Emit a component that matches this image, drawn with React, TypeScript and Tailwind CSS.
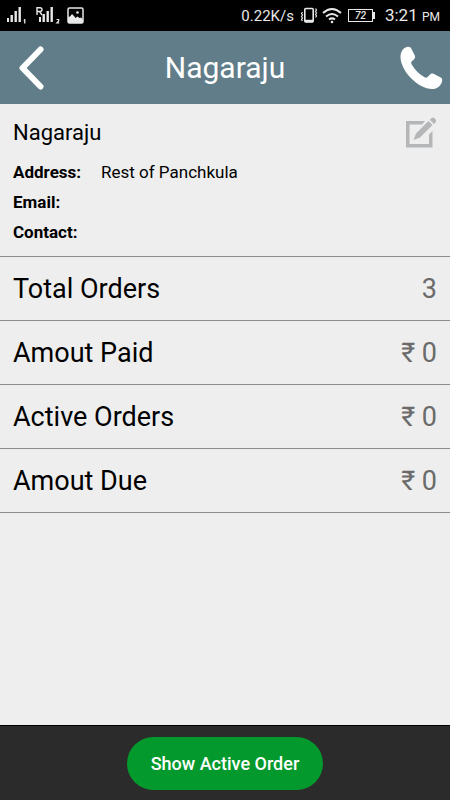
const ROWS = [
  { label: 'Total Orders', value: '3' },
  { label: 'Amout Paid', value: '₹ 0' },
  { label: 'Active Orders', value: '₹ 0' },
  { label: 'Amout Due', value: '₹ 0' },
];

function SignalOne() {
  return (
    <svg width="20" height="18" viewBox="0 0 20 18" fill="#e8e8e8" aria-hidden="true">
      <rect x="0" y="11" width="2" height="4" />
      <rect x="3.500" y="8" width="2.400" height="7" />
      <rect x="7.500" y="4" width="2.400" height="11" />
      <rect x="11.500" y="0" width="2.400" height="15" />
      <path d="M16.500 13l1-1h.900v4.500h-1.300v-3h-.600z" />
    </svg>
  );
}

function SignalTwo() {
  return (
    <svg width="25" height="18" viewBox="0 0 25 18" fill="#e8e8e8" aria-hidden="true">
      <path d="M1 8V0.700h3q2 0 2 1.900T4 4.500H1M3.600 4.500L6 8" fill="none" stroke="#e8e8e8" strokeWidth="1.400" />
      <rect x="3" y="10" width="2" height="5" />
      <rect x="6.500" y="7" width="2.400" height="8" />
      <rect x="10.500" y="4" width="2.400" height="11" />
      <rect x="14.500" y="0" width="2.400" height="15" />
      <path d="M20.500 12.500h2.200v1.500l-1.800 1.800h2.300" fill="none" stroke="#e8e8e8" strokeWidth="1.200" />
    </svg>
  );
}

function Picture() {
  return (
    <svg width="18" height="18" viewBox="0 0 18 18" aria-hidden="true">
      <rect x="1" y="1" width="15" height="15" rx="1.500" fill="none" stroke="#e8e8e8" strokeWidth="1.500" />
      <path d="M1 10l2-.5 2-2.500 2 2 1.500 2 2-1.500 2 1.500 1.500-.5 2 2v3.500H1z" fill="#e8e8e8" />
      <circle cx="10.500" cy="5.500" r="1.300" fill="#e8e8e8" />
    </svg>
  );
}

function Vibrate() {
  return (
    <svg width="18" height="17" viewBox="0 0 18 17" fill="none" stroke="#e8e8e8" aria-hidden="true">
      <rect x="4.800" y="1.500" width="8.400" height="13.500" rx="1" strokeWidth="1.600" />
      <path d="M5 14h8" strokeWidth="2.500" />
      <path d="M2.500 5l-1 1.500 1 1.500-1 1.500 1 1.500-1 1.500 1 1.500M15.500 1.500l1 1.500-1 1.500 1 1.500-1 1.500 1 1.500-1 1.500" strokeWidth="1.200" />
    </svg>
  );
}

function Wifi() {
  return (
    <svg width="20" height="17" viewBox="0 0 20 17" fill="none" stroke="#e8e8e8" strokeWidth="2" aria-hidden="true">
      <path d="M1 6Q10-2 19 6M4 9.500q6-5 12 0M7 12.500q3-2.300 6 0" />
      <circle cx="10" cy="15" r="1.300" fill="#e8e8e8" stroke="none" />
    </svg>
  );
}

function StatusBar() {
  return (
    <div className="flex h-[31px] items-center bg-black pr-[10px] pl-[7px] text-[#e8e8e8]">
      <div className="flex items-center">
        <SignalOne />
        <span className="ml-[9px]"><SignalTwo /></span>
        <span className="ml-1.5"><Picture /></span>
      </div>
      <div className="ml-auto flex items-center">
        <span className="text-[15px] leading-5">0.22K/s</span>
        <span className="ml-1.5"><Vibrate /></span>
        <span className="ml-1"><Wifi /></span>
        <span className="ml-1.5 flex items-center">
          <span className="flex h-[13px] w-[25px] items-center justify-center border border-[#e8e8e8] text-[10px] leading-none font-medium italic">72</span>
          <span className="h-[7px] w-0.5 bg-[#e8e8e8]" />
        </span>
        <span className="ml-[10px] text-[17px] leading-5">
          3:21 <span className="text-[12px]">PM</span>
        </span>
      </div>
    </div>
  );
}

export default function App() {
  return (
    <div className="flex min-h-screen flex-col bg-[#eeeeee] font-['Roboto','Noto_Sans',sans-serif] text-black">
      <StatusBar />
      <header className="flex h-[73px] items-center justify-between bg-[#607d89] pr-[6px] pl-[18px]">
        <button type="button" aria-label="Back" className="w-[33px]">
          <svg width="28" height="44" viewBox="0 0 28 44" fill="none" stroke="#fff" strokeWidth="6" strokeLinecap="round" strokeLinejoin="round">
            <path d="M22.500 3.500L4.500 22L22.500 40.500" />
          </svg>
        </button>
        <h1 className="text-[30px] leading-9 text-white">Nagaraju</h1>
        <button type="button" aria-label="Call" className="w-[45px]">
          <svg width="45" height="44" viewBox="0 0 45 44" fill="#fff">
            <path d="M1.500 11C1.500 5 5 1 9 .7C10.800.6 11.700 1.400 12.500 3L15.700 9.200C16.500 11 16.200 12.300 14.800 13.500L12.700 15.500C11.900 16.400 12.100 17.300 12.700 18.400C15.800 23.800 20.100 28.200 25.600 31.200C27 31.900 27.900 31.800 28.800 30.700L30.800 28.700C31.800 27.500 33.300 27.300 35 28.100L41.300 31.300C43 32.200 43.500 33.400 43.100 35.200C42 39.700 38.500 43 33 43.100C26.500 43 18.200 38.600 11.800 32C5.600 25.700 1.500 17.500 1.500 11Z" />
          </svg>
        </button>
      </header>

      <section className="border-b border-[#8c8c8c] px-[13px] pt-[13px] pb-[9px]">
        <div className="flex items-start justify-between">
          <h2 className="text-[22px] leading-8">Nagaraju</h2>
          <button type="button" aria-label="Edit">
            <svg width="32" height="32" viewBox="0 0 32 32" fill="#b4b6b8">
              <path d="M20 4H1V30.500H27.500V14L24 17.500V27H4.500V7.500H17Z" />
              <path d="M8.500 23L11 16.500L23.500 4L27.500 8L15 20.500Z" />
              <path d="M24.700 2.800L26.400 1.200Q28-.1 29.700 1.400L30.500 2.300Q31.700 4 30.300 5.600L29 7Z" />
            </svg>
          </button>
        </div>
        <dl className="mt-2 grid grid-cols-[88px_1fr] text-[17px] leading-[30px]">
          <dt className="font-bold">Address:</dt>
          <dd>Rest of Panchkula</dd>
          <dt className="font-bold">Email:</dt>
          <dd />
          <dt className="font-bold">Contact:</dt>
          <dd />
        </dl>
      </section>

      <dl className="flex-1">
        {ROWS.map((row) => (
          <div key={row.label} className="flex h-16 items-center justify-between border-b border-[#8c8c8c] px-[13px] text-[27px] leading-8">
            <dt>{row.label}</dt>
            <dd className="text-[#6b6b6b]">{row.value}</dd>
          </div>
        ))}
      </dl>

      <footer className="flex h-[75px] items-center justify-center border-t border-black bg-[#2b2b2b]">
        <button type="button" className="rounded-full bg-[#04992c] px-6 py-[14px] text-[18px] leading-[25px] font-medium text-white">
          Show Active Order
        </button>
      </footer>
    </div>
  );
}
